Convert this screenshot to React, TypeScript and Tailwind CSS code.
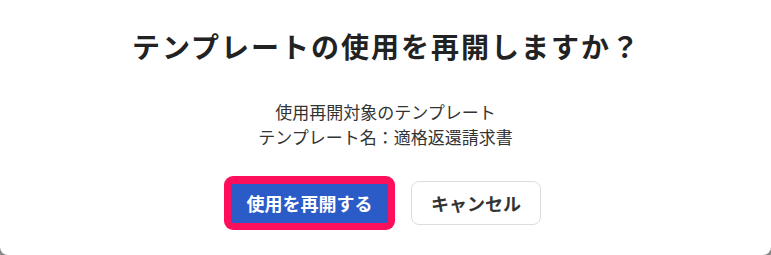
import React from "react";

export default function App() {
  return (
    <div className="w-[771px] h-[255px] bg-[#8a8a8a] overflow-hidden" style={{ fontFamily: '"Noto Sans CJK JP", "Noto Sans", sans-serif' }}>
      <div className="w-[771px] h-[255px] bg-white rounded-b-[8px] flex flex-col items-center">
        <h1 className="mt-[27px] text-[28px] leading-[38px] font-bold text-[#222222] tracking-[2px] pl-[2px]">
          テンプレートの使用を再開しますか？
        </h1>
        <div className="mt-[34px] text-center text-[17px] leading-[25px] text-[#333333]">
          <p>使用再開対象のテンプレート</p>
          <p>テンプレート名：適格返還請求書</p>
        </div>
        <div className="mt-[27px] mr-[6px] flex items-center gap-4">
          <div className="rounded-[9px] bg-[#fe0f5c] pt-[8px] pb-[7px] px-[7px]">
            <button className="w-[157px] h-[39px] rounded-[2px] bg-[#2a5bc7] text-white font-bold text-[18px]">
              使用を再開する
            </button>
          </div>
          <button className="w-[130px] h-[44px] rounded-[8px] border border-[#dddddd] bg-white text-[#333333] font-bold text-[18px]">
            キャンセル
          </button>
        </div>
      </div>
    </div>
  );
}
